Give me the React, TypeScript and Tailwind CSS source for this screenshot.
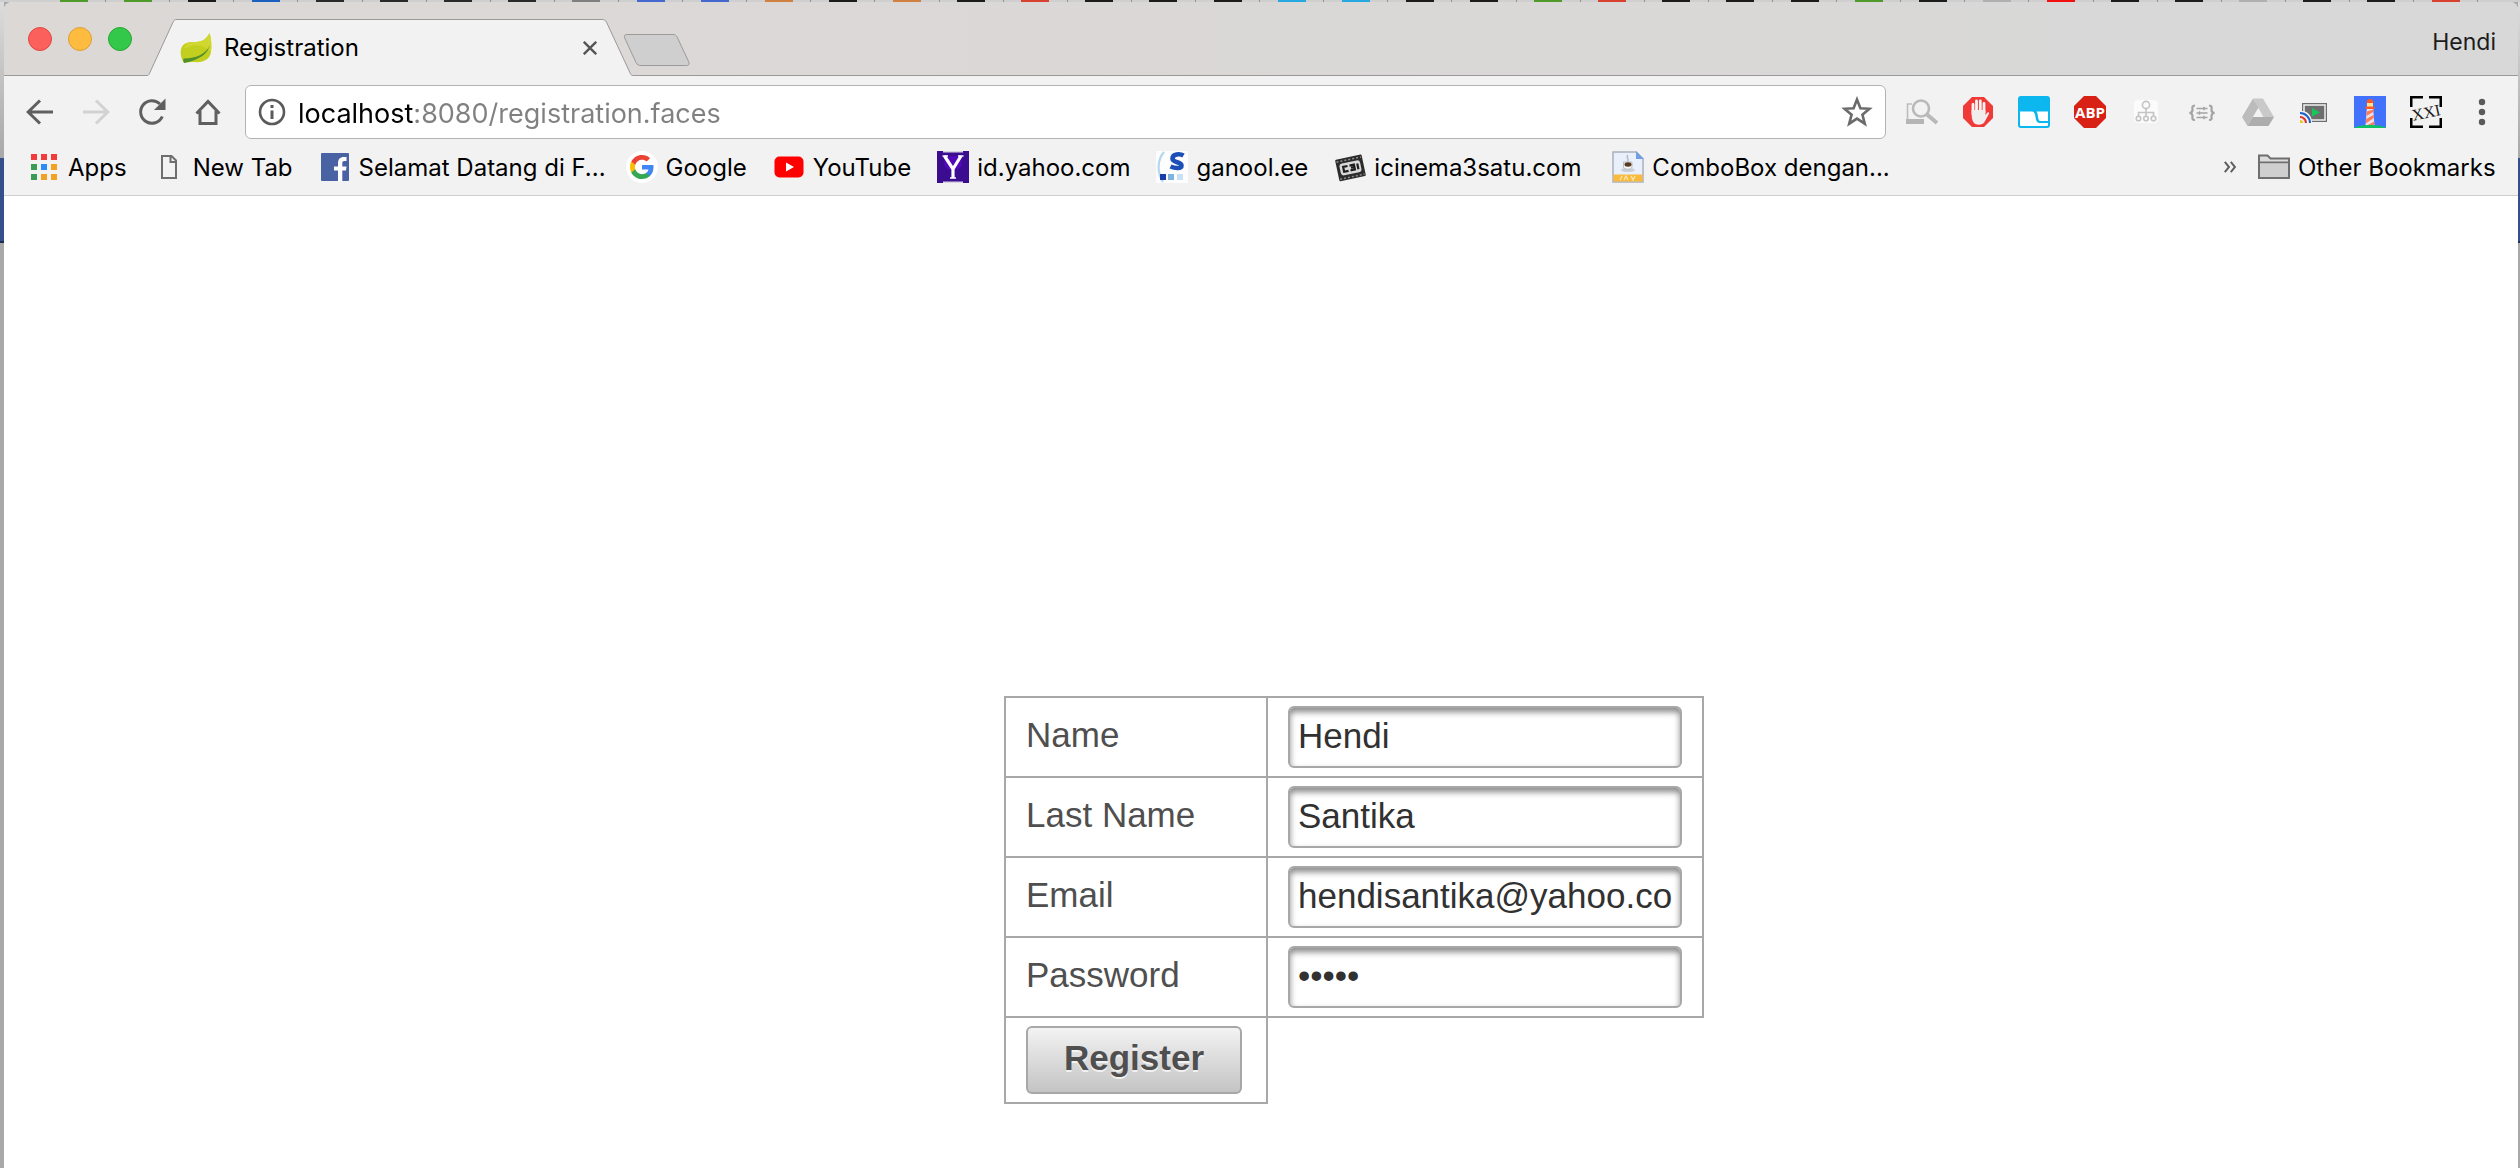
import React from "react";

type IconProps = { children: React.ReactNode };

function Icon({ children }: IconProps) {
  return (
    <svg viewBox="0 0 32 32" className="size-8 shrink-0" fill="none" aria-hidden>
      {children}
    </svg>
  );
}

/* ---------- strip of the window behind ---------- */

const backTabs = [
  "bg-[#4f9a2a]", "bg-[#4f9a2a]", "bg-[#1c1c1c]", "bg-[#1b5fc0]", "bg-[#2a2a2a]", "bg-[#2a2a2a]", "bg-[#2a2a2a]", "bg-[#2a2a2a]",
  "bg-[#808080]", "bg-[#4468d0]", "bg-[#4468d0]", "bg-[#d08040]", "bg-[#1c1c1c]", "bg-[#d08040]", "bg-[#1c1c1c]", "bg-[#d8402f]",
  "bg-[#1c1c1c]", "bg-[#1c1c1c]", "bg-[#1c1c1c]", "bg-[#25a9e0]", "bg-[#25a9e0]", "bg-[#1c1c1c]", "bg-[#1c1c1c]", "bg-[#4f9a2a]",
  "bg-[#d8402f]", "bg-[#1c1c1c]", "bg-[#1c1c1c]", "bg-[#1c1c1c]", "bg-[#4f9a2a]", "bg-[#1c1c1c]", "bg-[#b0b0b0]", "bg-[#f01010]",
  "bg-[#1c1c1c]", "bg-[#1c1c1c]", "bg-[#b0b0b0]", "bg-[#1c1c1c]", "bg-[#1c1c1c]", "bg-[#d8402f]",
];

function BackTabs() {
  return (
    <div className="flex h-0.5 bg-[#cfcfcf] px-[42px]" aria-hidden>
      {backTabs.map((color, i) => (
        <div key={i} className="flex flex-1 justify-center border-r border-[#8f8f8f]">
          <div className={`w-7 ${color}`} />
        </div>
      ))}
    </div>
  );
}

function SideStrip({ className }: { className: string }) {
  return (
    <div className={`flex shrink-0 flex-col ${className}`} aria-hidden>
      <div className="h-[156px] bg-linear-to-b from-[#dcdcdc] to-[#a8a8a8]" />
      <div className="h-[85px] border-b-2 border-[#1c2c55] bg-[#33508c]" />
      <div className="flex-1 bg-[#a9a9a9]" />
    </div>
  );
}

/* ---------- title bar ---------- */

function TitleBar() {
  return (
    <div className="flex h-[74px] rounded-t-lg border-b border-[#9a9898] bg-linear-to-r from-[#dcd8d6] to-[#d8d8d8] pl-6">
      <div className="flex items-center gap-4">
        <button aria-label="Close window" className="size-6 rounded-full border border-[#e14640] bg-[#fc605c]" />
        <button aria-label="Minimise window" className="size-6 rounded-full border border-[#de9f34] bg-[#fdbc40]" />
        <button aria-label="Zoom window" className="size-6 rounded-full border border-[#27a833] bg-[#34c84a]" />
      </div>
      <div className="relative -mb-px ml-[15px] flex w-[486px] items-center gap-3 self-stretch pt-5 pr-[36px] pb-0.5 pl-[33px]">
        <svg className="absolute bottom-0 left-0 h-[57px] w-[486px]" viewBox="0 0 486 57" fill="none" aria-hidden>
          <path d="M0 56.5C1 56.5 1.8 56 2.4 54.6L26 3.2C26.9 1.2 28 0.5 30 0.5H455C457.5 0.5 458.6 1.4 459.5 3.2L483.4 54.6C484 56 485 56.5 486 56.5V57H0Z" fill="#f2f2f2" />
          <path d="M0 56.5C1 56.5 1.8 56 2.4 54.6L26 3.2C26.9 1.2 28 0.5 30 0.5H455C457.5 0.5 458.6 1.4 459.5 3.2L483.4 54.6C484 56 485 56.5 486 56.5" stroke="#9a9898" />
        </svg>
        <svg viewBox="0 0 32 32" className="relative size-8 shrink-0" aria-hidden>
          <path d="M29.5 1C31 6 32 13 31 20C30 27 24 31 14 30C10 30 7 30 4 31C1 27 0 21 1 17C3 10 9 10 16 10C23 10 27 6 29.5 1Z" fill="#c3cf1f" />
          <path d="M29.5 1C31 6 32 13 31 20C26 14 16 10 4 17C6 10 11 10 16 10C23 10 27 6 29.5 1Z" fill="#d0d830" />
          <path d="M30 13C26 22 17 26 4 26.500C3 26.500 3 28.500 4 31C7 30 10 30 12 29C21 26 28 21 30 13Z" fill="#4f8f2c" />
        </svg>
        <span className="relative flex-1 text-2xl leading-8 text-black">Registration</span>
        <button aria-label="Close tab" className="relative">
          <svg viewBox="0 0 14 14" className="size-3.5" stroke="#565656" strokeWidth="2.4" aria-hidden>
            <path d="M0.800 0.800L13.200 13.200M13.200 0.800L0.800 13.200" />
          </svg>
        </button>
      </div>
      <button aria-label="New tab" className="mb-2 -ml-[10px] self-end">
        <svg viewBox="0 0 68 34" className="h-[34px] w-[68px]" aria-hidden>
          <path d="M4 1.500H50C52 1.500 53.300 2.300 54.200 4.200L65.600 28.500C66.700 31 66 32.500 63.500 32.500H18C15.500 32.500 14 31.500 13 29.500L1.800 5.200C0.800 2.800 1.500 1.500 4 1.500Z" fill="#cfcfcf" stroke="#9b9b9b" />
        </svg>
      </button>
      <span className="mt-6 mr-[22px] ml-auto text-[23px] leading-8 text-[#1c1c1c]">Hendi</span>
    </div>
  );
}

/* ---------- toolbar ---------- */

function NavButtons() {
  return (
    <>
      <button aria-label="Back">
        <Icon><path d="M29 16H4M16 4.500L4.200 16L16 27.500" stroke="#5f5f5f" strokeWidth="3" /></Icon>
      </button>
      <button aria-label="Forward">
        <Icon><path d="M3 16H28M16 4.500L27.800 16L16 27.500" stroke="#d2d2d2" strokeWidth="3" /></Icon>
      </button>
      <button aria-label="Reload">
        <Icon>
          <path d="M26.300 20.500A11.300 11.300 0 1 1 24 8" stroke="#5f5f5f" strokeWidth="3" />
          <path d="M29.500 2.500V14H18Z" fill="#5f5f5f" />
        </Icon>
      </button>
      <button aria-label="Home">
        <Icon><path d="M4.500 17.500L16 5.500L27.500 17.500M8 15V27.500H24V15" stroke="#5f5f5f" strokeWidth="3" /></Icon>
      </button>
    </>
  );
}

const extensions: { name: string; art: React.ReactNode }[] = [
  {
    name: "Page search",
    art: (
      <>
        <path d="M6 8H1.500V26H17V23" stroke="#bdbdbd" strokeWidth="1.600" />
        <path d="M0 23H18V28H0Z" fill="#b5b5b5" />
        <circle cx="15" cy="12.500" r="8" fill="#f2f2f2" stroke="#b9b9b9" strokeWidth="2.600" />
        <path d="M21 18.500L31 27" stroke="#b9b9b9" strokeWidth="4" />
      </>
    ),
  },
  {
    name: "Ad blocker",
    art: (
      <>
        <path d="M10 1H22L31 10V22L22 31H10L1 22V10Z" fill="#f03a38" />
        <path d="M11 18V8.500M14.500 16V5M18.300 16V5M22 17V7.500" stroke="#f7f3f2" strokeWidth="2.800" strokeLinecap="round" />
        <path d="M9.600 14H23.400V19L25.500 16.500C26.500 15.800 27.500 16.500 27 17.800L22.500 26C20.500 29.500 13 29.800 11 25.500C10 23.500 9.600 20 9.600 17Z" fill="#f1eded" />
      </>
    ),
  },
  {
    name: "Window resizer",
    art: (
      <>
        <rect width="32" height="32" rx="3" fill="#0cb6ef" />
        <path d="M2 15.500H14C19 15.500 16 26.500 21 27H30V28.500C30 29.500 29.500 30 28.500 30H3.500C2.500 30 2 29.500 2 28.500Z" fill="#fff" />
        <path d="M18.500 15.500H30V25H22C19.500 24 20.500 18 18.500 15.500Z" fill="#fff" />
      </>
    ),
  },
  {
    name: "Adblock Plus",
    art: (
      <>
        <path d="M10 0H22L32 10V22L22 32H10L0 22V10Z" fill="#d82114" />
        <text x="16" y="21.500" textAnchor="middle" fontFamily="'Open Sans', sans-serif" fontWeight="700" fontSize="15" fill="#fff">ABP</text>
      </>
    ),
  },
  {
    name: "Site map",
    art: (
      <>
        <rect x="4" y="4" width="24" height="23" rx="4" fill="#fbfbfb" />
        <g stroke="#c4c4c4" strokeWidth="1.600">
          <circle cx="16" cy="9" r="3.600" />
          <path d="M16 12.500V20M8.500 20V16.500H23.500V20" />
          <circle cx="8.500" cy="22.500" r="2.300" />
          <circle cx="16" cy="22.500" r="2.300" />
          <circle cx="23.500" cy="22.500" r="2.300" />
        </g>
      </>
    ),
  },
  {
    name: "JSON viewer",
    art: (
      <g stroke="#a3a3a3" strokeWidth="2.200">
        <path d="M9 9.500C5.500 9.500 6.500 12 6.500 14C6.500 15.800 5.500 16.800 3.500 17C5.500 17.200 6.500 18.200 6.500 20C6.500 22 5.500 24 9 24" />
        <path d="M23 9.500C26.500 9.500 25.500 12 25.500 14C25.500 15.800 26.500 16.800 28.500 17C26.500 17.200 25.500 18.200 25.500 20C25.500 22 26.500 24 23 24" />
        <path d="M10.500 12.500H21.500M10.500 17H21.500M10.500 21.500H21.500" strokeWidth="1.400" />
        <path d="M18 10.800V14.200M13.500 15.300V18.700M18 19.800V23.200" strokeWidth="1.400" />
      </g>
    ),
  },
  {
    name: "Drive",
    art: (
      <>
        <path d="M11 2.500H21L32 21H21.500Z" fill="#c9c9c9" />
        <path d="M11 2.500L0 21L5.500 30L16.500 11.500Z" fill="#bcbcbc" />
        <path d="M5.500 30L10.800 21H32L26.500 30Z" fill="#adadad" />
      </>
    ),
  },
  {
    name: "Cast",
    art: (
      <>
        <rect x="4" y="7" width="25" height="19" fill="#6e6e6e" />
        <rect x="6" y="9" width="21" height="15" stroke="#f2f2f2" strokeWidth="1.500" />
        <path d="M14 12L22 16.500L14 20.500Z" fill="#16c75a" />
        <path d="M1 15H4C10 15 14 20 14 27H1Z" fill="#f2f2f2" />
        <path d="M2 17A10 10 0 0 1 12 27" stroke="#1c63c9" strokeWidth="2" />
        <path d="M2 21A6 6 0 0 1 8 27" stroke="#d9352a" strokeWidth="2.200" />
        <path d="M2 24A3.200 3.200 0 0 1 5.200 27H2Z" fill="#f3c51b" />
      </>
    ),
  },
  {
    name: "Lighthouse",
    art: (
      <>
        <rect width="32" height="32" fill="#4271fb" />
        <path d="M12.500 7C12.500 1.800 19.500 1.800 19.500 7Z" fill="#ff5a24" />
        <rect x="13" y="7" width="6" height="4" fill="#ffe287" />
        <rect x="11.500" y="10.500" width="9" height="2.500" fill="#ff5a24" />
        <path d="M12.800 13H19.200L20.500 30H11.500Z" fill="#e9e2ee" />
        <path d="M12.700 15.500L19.300 13.500V16L12.400 20ZM12.200 23L19.700 18.800V22L11.900 27.500ZM12 30L20.200 25.500V30Z" fill="#ff7c52" />
        <path d="M0 32C4 28 28 28 32 32Z" fill="#0cc163" />
      </>
    ),
  },
  {
    name: "Cinema XXI",
    art: (
      <>
        <path d="M13 1.200H1.200V11M19 1.200H30.800V11M13 30.800H1.200V22M19 30.800H30.800V22" stroke="#000" strokeWidth="2.600" />
        <text x="16" y="22" textAnchor="middle" transform="rotate(-12 16 16)" fontFamily="'Liberation Serif', serif" fontSize="16" fill="#1a1a1a">XXI</text>
      </>
    ),
  },
];

function Toolbar() {
  return (
    <div className="flex items-center pt-[9px] pr-5 pl-5">
      <div className="flex gap-6">
        <NavButtons />
      </div>
      <div className="ml-[21px] flex h-[54px] flex-1 items-center rounded-md border border-[#b3b3b3] bg-white pr-3 pl-[10px]">
        <button aria-label="Site information">
          <Icon>
            <circle cx="16" cy="16" r="12" stroke="#5a5a5a" strokeWidth="2.600" />
            <path d="M16 9V12M16 14.500V23" stroke="#5a5a5a" strokeWidth="3" />
          </Icon>
        </button>
        <input
          aria-label="Address"
          defaultValue="localhost:8080/registration.faces"
          className="ml-2.5 h-10 min-w-0 flex-1 bg-linear-to-r from-black from-[115px] to-[#808080] to-[115px] bg-clip-text pt-0.5 text-[27px] leading-9 text-transparent caret-black outline-none"
        />
        <button aria-label="Bookmark this page">
          <Icon>
            <path d="M16 3.500L19.400 12.300L28.400 12.800L21.400 18.700L23.800 27.700L16 22.600L8.200 27.700L10.600 18.700L3.600 12.800L12.600 12.300Z" stroke="#6b6b6b" strokeWidth="2.600" />
          </Icon>
        </button>
      </div>
      <div className="ml-5 flex gap-6">
        {extensions.map((e) => (
          <button key={e.name} aria-label={e.name}>
            <Icon>{e.art}</Icon>
          </button>
        ))}
        <button aria-label="Menu">
          <Icon>
            <circle cx="16" cy="6" r="3.200" fill="#5a5a5a" />
            <circle cx="16" cy="16" r="3.200" fill="#5a5a5a" />
            <circle cx="16" cy="26" r="3.200" fill="#5a5a5a" />
          </Icon>
        </button>
      </div>
    </div>
  );
}

/* ---------- bookmarks ---------- */

const bookmarks: { title: string; width?: string; art: React.ReactNode }[] = [
  {
    title: "Apps",
    art: (
      <>
        <path d="M3 3H9V9H3ZM13 3H19V9H13ZM23 3H29V9H23Z" fill="#f43b3b" />
        <path d="M3 13H9V19H3ZM3 23H9V29H3Z" fill="#3b9d55" />
        <path d="M13 13H19V19H13Z" fill="#2b8cf5" />
        <path d="M23 13H29V19H23ZM13 23H19V29H13ZM23 23H29V29H23Z" fill="#f1a223" />
      </>
    ),
  },
  {
    title: "New Tab",
    art: <path d="M9 5H18.500L23 9.500V27H9ZM17.500 5V11H23" stroke="#6e6e6e" strokeWidth="2" />,
  },
  {
    title: "Selamat Datang di F...",
    width: "w-[281px]",
    art: (
      <>
        <rect x="2" y="2" width="28" height="28" rx="1" fill="#4862a3" />
        <path d="M19 30V19.500H15V15.500H19V12C19 8.200 21 6 25 6H27.500V10H25.200C23.800 10 23.300 10.700 23.300 12V15.500H27.500L27 19.500H23.300V30Z" fill="#fff" />
      </>
    ),
  },
  {
    title: "Google",
    art: (
      <>
        <circle cx="16" cy="16" r="16" fill="#fff" />
        <g transform="translate(4 4)">
          <path d="M23.500 12.270c0-.79-.07-1.540-.19-2.270H12v4.510h6.470c-.29 1.480-1.140 2.730-2.400 3.580v3h3.860c2.260-2.090 3.570-5.170 3.570-8.820z" fill="#4285f4" />
          <path d="M12 24c3.240 0 5.950-1.080 7.930-2.910l-3.860-3c-1.080.72-2.450 1.160-4.070 1.160-3.130 0-5.780-2.110-6.730-4.960H1.290v3.090C3.260 21.300 7.310 24 12 24z" fill="#34a853" />
          <path d="M5.270 14.290c-.25-.72-.38-1.490-.38-2.290s.14-1.570.38-2.290V6.620H1.290C.47 8.240 0 10.060 0 12s.47 3.760 1.290 5.380l3.980-3.090z" fill="#fbbc05" />
          <path d="M12 4.750c1.770 0 3.350.61 4.600 1.800l3.420-3.420C17.950 1.190 15.240 0 12 0 7.310 0 3.260 2.700 1.290 6.620l3.980 3.090c.95-2.850 3.600-4.960 6.730-4.960z" fill="#ea4335" />
        </g>
      </>
    ),
  },
  {
    title: "YouTube",
    art: (
      <>
        <rect x="1.500" y="5.500" width="29" height="21" rx="5" fill="#f00" />
        <path d="M13 11.500L21 16L13 20.500Z" fill="#fff" />
      </>
    ),
  },
  {
    title: "id.yahoo.com",
    art: (
      <>
        <rect width="32" height="32" fill="#3c0c90" />
        <rect x="7" y="5" width="18" height="14" rx="7" fill="#5008b8" />
        <path d="M6 0H26V1.500H6ZM6 30.500H26V32H6Z" fill="#d8d4e0" />
        <path d="M7.500 5L16 18V27M24 5L16 18" stroke="#fff" strokeWidth="3.200" />
        <path d="M5.500 5H11M21 5H26.500M13 27H19" stroke="#fff" strokeWidth="1.600" />
      </>
    ),
  },
  {
    title: "ganool.ee",
    art: (
      <>
        <rect width="32" height="32" fill="#fdfdfd" />
        <path d="M8 1C1 9 1 22 7 31" stroke="#b5d6ef" strokeWidth="2.200" />
        <path d="M27.500 4.500C24 2.500 16.500 2.600 16.500 7.500C16.500 12 25.500 10.500 25.500 14.500C25.500 18 19 17.500 14.500 15.500" stroke="#1d4fb8" strokeWidth="4.600" />
        <rect x="4" y="23" width="6" height="6" fill="#163fa8" />
        <rect x="12" y="23" width="6" height="6" fill="#7fb4dd" />
        <rect x="21" y="23" width="6" height="6" fill="#c9e1f3" />
      </>
    ),
  },
  {
    title: "icinema3satu.com",
    width: "w-[252px]",
    art: (
      <g transform="rotate(-12 16 17)">
        <rect x="3" y="6" width="27" height="22" rx="1" fill="#2c2c2c" />
        <path d="M4 8.500H29M4 26H29" stroke="#8d8d8d" strokeWidth="1.500" strokeDasharray="2 2" />
        <rect x="6" y="11" width="21" height="12" rx="3" fill="#d9d9d9" />
        <path d="M14 14.500H9.500V19.500H14M16 14.500H20.500V19.500H16M20 17H17M24 14V20" stroke="#1d1d1d" strokeWidth="2.200" />
      </g>
    ),
  },
  {
    title: "ComboBox dengan...",
    art: (
      <>
        <path d="M1 1H24L31 8V31H1Z" fill="#e9f0fb" stroke="#a9b0bd" strokeWidth="1.500" />
        <path d="M24 0V8H32Z" fill="#6f9fe0" />
        <path d="M1.500 23.500H30.500V30.500H1.500Z" fill="#f9b93a" />
        <path d="M8 29L10 25M12 29L14 25L16 29M19 25L21 29L23 25" stroke="#fde6a8" strokeWidth="1.400" />
        <ellipse cx="16" cy="19" rx="7" ry="2" fill="#c9ced8" />
        <path d="M11.500 11H20V16C20 19 11.500 19 11.500 16Z" fill="#f7f7f7" stroke="#b7bcc6" />
        <path d="M16 4C13 6.500 18 7.500 15.500 10" stroke="#b7bcc6" strokeWidth="1.500" />
        <ellipse cx="16" cy="13.500" rx="3.500" ry="2.200" fill="#5b3a22" />
      </>
    ),
  },
];

function BookmarkBar() {
  return (
    <nav aria-label="Bookmarks" className="flex h-[57px] items-center border-b border-[#cfcfcf] pr-[18px] pl-6 text-2xl leading-8 whitespace-nowrap text-black">
      <div className="flex gap-[26px]">
        {bookmarks.map((b) => (
          <a key={b.title} href="#" className={`flex items-center gap-2 ${b.width ?? ""}`}>
            <Icon>{b.art}</Icon>
            <span className="pt-0.5">{b.title}</span>
          </a>
        ))}
      </div>
      <button aria-label="More bookmarks" className="ml-auto">
        <svg viewBox="0 0 12 12" className="size-3" fill="none" stroke="#5f5f5f" strokeWidth="2" aria-hidden>
          <path d="M0.800 0.800L5 6L0.800 11.200M6.800 0.800L11 6L6.800 11.200" />
        </svg>
      </button>
      <button className="ml-[22px] flex w-[242px] items-center gap-2">
        <Icon>
          <path d="M1 27V4.500H9.500L12.500 7.500H31V27Z" fill="#dcdcdc" stroke="#6f6f6f" strokeWidth="2" />
          <path d="M1 11.500H31" stroke="#6f6f6f" strokeWidth="2" />
          <path d="M2 12.500H30V26H2Z" fill="#cfcfcf" />
        </Icon>
        <span className="pt-0.5">Other Bookmarks</span>
      </button>
    </nav>
  );
}

/* ---------- page ---------- */

const fields = [
  { id: "name", label: "Name", type: "text", value: "Hendi" },
  { id: "lastName", label: "Last Name", type: "text", value: "Santika" },
  { id: "email", label: "Email", type: "text", value: "hendisantika@yahoo.com" },
  { id: "password", label: "Password", type: "password", value: "12345" },
];

function RegistrationForm() {
  return (
    <form onSubmit={(e) => e.preventDefault()}>
      <table className="border-collapse text-[35px] leading-10 text-[#4f4f4f]">
        <tbody>
          {fields.map((f) => (
            <tr key={f.id}>
              <td className="border-2 border-[#a8a8a8] px-5 pt-1.5 pb-2.5">
                <label htmlFor={f.id}>{f.label}</label>
              </td>
              <td className="border-2 border-[#a8a8a8] px-5 py-2">
                <input
                  id={f.id}
                  type={f.type}
                  defaultValue={f.value}
                  className="block h-[62px] w-[394px] rounded-md border-2 border-[#a8a8a8] bg-white px-2 pb-0.5 text-[#313131] shadow-[inset_0_4px_6px_#888888] outline-none"
                />
              </td>
            </tr>
          ))}
          <tr>
            <td className="border-2 border-[#a8a8a8] py-2 pr-6 pl-5">
              <button
                type="submit"
                className="block h-[68px] w-[216px] rounded-md border-2 border-[#a8a8a8] bg-linear-to-b from-[#f3f3f3] to-[#c4c4c4] pb-1 font-bold text-[#4f4f4f] [text-shadow:0_2px_0_rgba(255,255,255,0.7)]"
              >
                Register
              </button>
            </td>
          </tr>
        </tbody>
      </table>
    </form>
  );
}

export default function App() {
  return (
    <div className="flex min-h-screen flex-col bg-[#a9a9a9] font-['Inter',sans-serif]">
      <BackTabs />
      <div className="flex flex-1">
        <SideStrip className="w-1" />
        <div className="flex min-w-0 flex-1 flex-col">
          <header className="rounded-t-lg bg-[#f2f2f2]">
            <TitleBar />
            <Toolbar />
            <BookmarkBar />
          </header>
          <main className="flex flex-1 justify-center bg-white pt-[500px] pl-[186px] font-['Liberation_Sans',sans-serif]">
            <RegistrationForm />
          </main>
        </div>
        <SideStrip className="w-0.5" />
      </div>
    </div>
  );
}
